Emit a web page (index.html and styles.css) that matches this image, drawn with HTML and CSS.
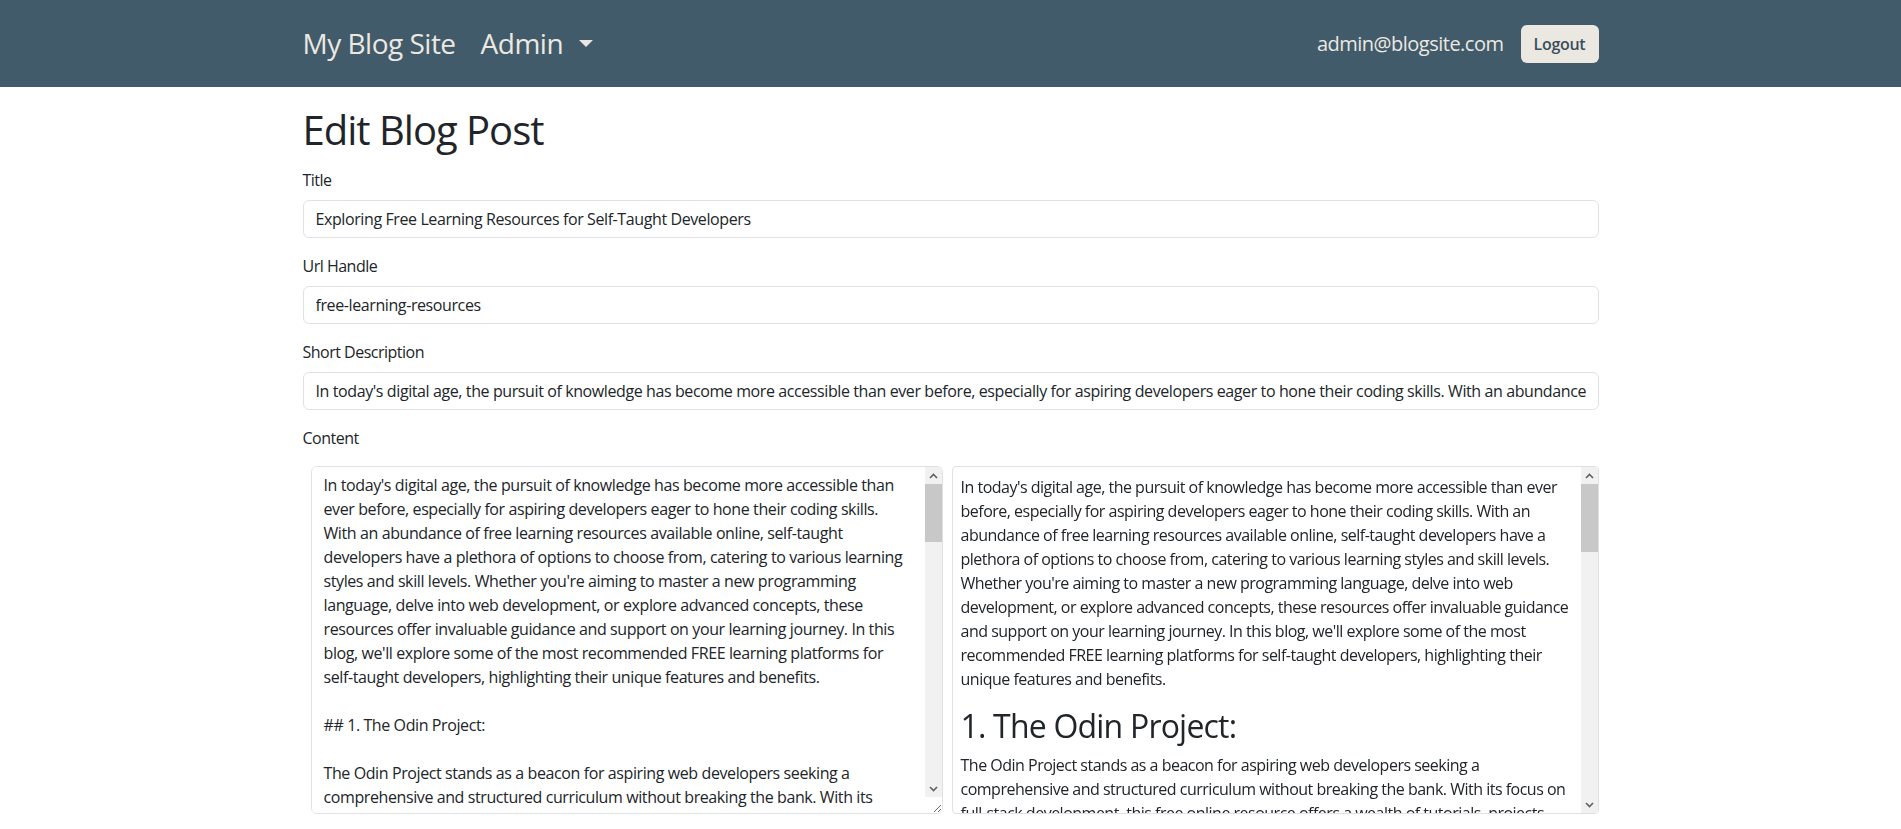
FILE: index.html
```html
<!DOCTYPE html>
<html lang="en">
<head>
<meta charset="utf-8">
<title>Edit Blog Post - My Blog Site</title>
<link rel="stylesheet" href="styles.css">
</head>
<body>
<nav class="navbar">
  <div class="nav-inner">
    <a class="brand" href="#">My Blog Site</a>
    <a class="admin" href="#">Admin<span class="caret"></span></a>
    <div class="nav-right">
      <span class="email">admin@blogsite.com</span>
      <button class="logout" type="button">Logout</button>
    </div>
  </div>
</nav>
<main class="page">
  <h1 class="page-title">Edit Blog Post</h1>
  <form class="post-form">
    <div class="field">
      <label class="label" for="title">Title</label>
      <input class="control" id="title" type="text" value="Exploring Free Learning Resources for Self-Taught Developers">
    </div>
    <div class="field">
      <label class="label" for="handle">Url Handle</label>
      <input class="control" id="handle" type="text" value="free-learning-resources">
    </div>
    <div class="field">
      <label class="label" for="short">Short Description</label>
      <input class="control" id="short" type="text" value="In today's digital age, the pursuit of knowledge has become more accessible than ever before, especially for aspiring developers eager to hone their coding skills. With an abundance of free learning resources available online, self-taught developers have a plethora of options to choose from.">
    </div>
    <div class="field">
      <label class="label" for="content">Content</label>
      <div class="editor">
        <div class="pane pane-input">
          <textarea class="editor-input" id="content">In today's digital age, the pursuit of knowledge has become more accessible than ever before, especially for aspiring developers eager to hone their coding skills. With an abundance of free learning resources available online, self-taught developers have a plethora of options to choose from, catering to various learning styles and skill levels. Whether you're aiming to master a new programming language, delve into web development, or explore advanced concepts, these resources offer invaluable guidance and support on your learning journey. In this blog, we'll explore some of the most recommended FREE learning platforms for self-taught developers, highlighting their unique features and benefits.

## 1. The Odin Project:

The Odin Project stands as a beacon for aspiring web developers seeking a comprehensive and structured curriculum without breaking the bank. With its focus on full-stack development, this free online resource offers a wealth of tutorials, projects, and community support to guide learners from the fundamentals of HTML, CSS, and JavaScript all the way to building complete applications with Ruby on Rails or Node.js.

## 2. freeCodeCamp:

freeCodeCamp is a nonprofit organization that has helped millions of people learn to code for free. Its interactive curriculum covers responsive web design, JavaScript algorithms and data structures, front-end libraries, back-end development, and more. Learners earn verified certifications by completing hands-on projects, and the vibrant forum makes it easy to get help whenever you get stuck.

## 3. MDN Web Docs:

Maintained by Mozilla and a global community of contributors, MDN Web Docs is the go-to reference for anyone working with web technologies. Beyond its detailed documentation of HTML, CSS, and JavaScript, MDN offers beginner-friendly learning modules that walk you through core concepts step by step, complete with examples, assessments, and best practices.

## 4. CS50 by Harvard:

Harvard's CS50: Introduction to Computer Science is one of the most popular computer science courses in the world, and it is available completely free online. The course covers algorithms, data structures, memory, web development, and more using languages such as C, Python, SQL, and JavaScript, giving self-taught developers a solid foundation in computational thinking.

## 5. Khan Academy:

Khan Academy offers free, self-paced courses in computer programming, including JavaScript, HTML/CSS, and SQL. Its interactive coding environment lets learners see the results of their code instantly, which makes it an excellent starting point for absolute beginners who want to build confidence before diving into more advanced material.

## 6. Microsoft Learn:

Microsoft Learn provides free, interactive learning paths covering C#, .NET, ASP.NET Core, Azure, and much more. With guided modules, sandbox environments, and clear explanations, it is an especially valuable resource for developers who want to build modern web applications and APIs using the Microsoft technology stack.

## 7. YouTube Channels:

YouTube hosts an incredible variety of free programming tutorials from creators such as Traversy Media, The Net Ninja, Fireship, and freeCodeCamp's own channel. Whether you prefer short crash courses or in-depth multi-hour walkthroughs, video content can be a great complement to written tutorials and hands-on practice.

## Conclusion:

The journey of a self-taught developer is challenging but incredibly rewarding. By taking advantage of these free learning resources, you can build a strong foundation, develop real-world projects, and connect with supportive communities along the way. Stay curious, practice consistently, and remember that every expert was once a beginner. Happy coding!</textarea>
          <div class="scrollbar scrollbar-input" aria-hidden="true">
            <span class="sb-btn"><svg width="9" height="6" viewBox="0 0 9 6"><polyline points="1,5 4.5,1.5 8,5" fill="none" stroke="#606060" stroke-width="1.6"/></svg></span>
            <span class="sb-thumb sb-thumb-input"></span>
            <span class="sb-btn sb-down"><svg width="9" height="6" viewBox="0 0 9 6"><polyline points="1,1 4.5,4.5 8,1" fill="none" stroke="#606060" stroke-width="1.6"/></svg></span>
          </div>
        </div>
        <div class="pane pane-preview">
          <div class="preview">
            <p>In today's digital age, the pursuit of knowledge has become more accessible than ever before, especially for aspiring developers eager to hone their coding skills. With an abundance of free learning resources available online, self-taught developers have a plethora of options to choose from, catering to various learning styles and skill levels. Whether you're aiming to master a new programming language, delve into web development, or explore advanced concepts, these resources offer invaluable guidance and support on your learning journey. In this blog, we'll explore some of the most recommended FREE learning platforms for self-taught developers, highlighting their unique features and benefits.</p>
            <h2>1. The Odin Project:</h2>
            <p>The Odin Project stands as a beacon for aspiring web developers seeking a comprehensive and structured curriculum without breaking the bank. With its focus on full-stack development, this free online resource offers a wealth of tutorials, projects, and community support to guide learners from the fundamentals of HTML, CSS, and JavaScript all the way to building complete applications with Ruby on Rails or Node.js.</p>
            <h2>2. freeCodeCamp:</h2>
            <p>freeCodeCamp is a nonprofit organization that has helped millions of people learn to code for free. Its interactive curriculum covers responsive web design, JavaScript algorithms and data structures, front-end libraries, back-end development, and more. Learners earn verified certifications by completing hands-on projects, and the vibrant forum makes it easy to get help whenever you get stuck.</p>
            <h2>3. MDN Web Docs:</h2>
            <p>Maintained by Mozilla and a global community of contributors, MDN Web Docs is the go-to reference for anyone working with web technologies. Beyond its detailed documentation of HTML, CSS, and JavaScript, MDN offers beginner-friendly learning modules that walk you through core concepts step by step, complete with examples, assessments, and best practices.</p>
            <h2>4. CS50 by Harvard:</h2>
            <p>Harvard's CS50: Introduction to Computer Science is one of the most popular computer science courses in the world, and it is available completely free online. The course covers algorithms, data structures, memory, web development, and more using languages such as C, Python, SQL, and JavaScript, giving self-taught developers a solid foundation in computational thinking.</p>
            <h2>5. Khan Academy:</h2>
            <p>Khan Academy offers free, self-paced courses in computer programming, including JavaScript, HTML/CSS, and SQL. Its interactive coding environment lets learners see the results of their code instantly, which makes it an excellent starting point for absolute beginners who want to build confidence before diving into more advanced material.</p>
            <h2>6. Microsoft Learn:</h2>
            <p>Microsoft Learn provides free, interactive learning paths covering C#, .NET, ASP.NET Core, Azure, and much more. With guided modules, sandbox environments, and clear explanations, it is an especially valuable resource for developers who want to build modern web applications and APIs using the Microsoft technology stack.</p>
            <h2>7. YouTube Channels:</h2>
            <p>YouTube hosts an incredible variety of free programming tutorials from creators such as Traversy Media, The Net Ninja, Fireship, and freeCodeCamp's own channel. Whether you prefer short crash courses or in-depth multi-hour walkthroughs, video content can be a great complement to written tutorials and hands-on practice.</p>
            <h2>Conclusion:</h2>
            <p>The journey of a self-taught developer is challenging but incredibly rewarding. By taking advantage of these free learning resources, you can build a strong foundation, develop real-world projects, and connect with supportive communities along the way. Stay curious, practice consistently, and remember that every expert was once a beginner. Happy coding!</p>
          </div>
          <div class="scrollbar scrollbar-preview" aria-hidden="true">
            <span class="sb-btn"><svg width="9" height="6" viewBox="0 0 9 6"><polyline points="1,5 4.5,1.5 8,5" fill="none" stroke="#606060" stroke-width="1.6"/></svg></span>
            <span class="sb-thumb sb-thumb-preview"></span>
            <span class="sb-btn sb-down"><svg width="9" height="6" viewBox="0 0 9 6"><polyline points="1,1 4.5,4.5 8,1" fill="none" stroke="#606060" stroke-width="1.6"/></svg></span>
          </div>
        </div>
      </div>
    </div>
  </form>
</main>
</body>
</html>
```
FILE: styles.css
```css
* { box-sizing: border-box; }

html, body { margin: 0; padding: 0; }

body {
  font-family: "Open Sans", "Noto Sans", sans-serif;
  font-size: 16px;
  line-height: 1.5;
  letter-spacing: -0.5px;
  color: #212529;
  background: #ffffff;
}

.navbar {
  background: #415b6a;
  height: 87px;
}

.nav-inner {
  width: 1296px;
  height: 100%;
  margin: 0 auto;
  display: flex;
  align-items: center;
}

.brand,
.admin {
  font-size: 28px;
  line-height: 1.2;
  letter-spacing: -0.5px;
  color: #ece8e1;
  text-decoration: none;
}

.brand { margin-right: 25px; }

.admin {
  display: flex;
  align-items: center;
}

.caret {
  width: 0;
  height: 0;
  margin-left: 16px;
  border-left: 7px solid transparent;
  border-right: 7px solid transparent;
  border-top: 7px solid #ece8e1;
}

.nav-right {
  margin-left: auto;
  display: flex;
  align-items: center;
  gap: 17px;
}

.email {
  font-size: 20px;
  letter-spacing: -0.5px;
  color: #ece8e1;
}

.logout {
  width: 78px;
  height: 38px;
  border: 0;
  border-radius: 6px;
  background: #ebe8e2;
  color: #3b4f5c;
  font-family: inherit;
  font-size: 16px;
  font-weight: 600;
  letter-spacing: -0.3px;
  padding: 0;
}

.page {
  width: 1296px;
  margin: 0 auto;
}

.page-title {
  font-size: 40px;
  font-weight: 400;
  line-height: 1.2;
  letter-spacing: -1px;
  margin: 19px 0 14px;
}

.post-form { margin: 0; }

.field { margin-bottom: 16px; }

.label {
  display: block;
  margin-bottom: 8px;
}

.control {
  display: block;
  width: 100%;
  height: 38px;
  padding: 6px 12px;
  font-family: inherit;
  font-size: 16px;
  line-height: 1.5;
  letter-spacing: -0.4px;
  color: #212529;
  background: #fff;
  border: 1px solid #dee2e6;
  border-radius: 6px;
}

.editor {
  display: flex;
  gap: 9px;
  padding: 8px 0 0 8px;
}

.pane {
  position: relative;
  height: 348px;
}

.pane-input {
  width: 632px;
  flex: none;
}

.pane-preview { flex: 1; }

.editor-input {
  display: block;
  width: 100%;
  height: 100%;
  padding: 6px 29px 6px 12px;
  font-family: inherit;
  font-size: 16px;
  line-height: 1.5;
  letter-spacing: -0.4px;
  color: #212529;
  border: 1px solid #dee2e6;
  border-radius: 6px;
  overflow-y: scroll;
  margin: 0;
}

.preview {
  height: 100%;
  padding: 8px 25px 8px 8px;
  border: 1px solid #dee2e6;
  border-radius: 4px;
  overflow-y: scroll;
}

.preview p { margin: 0 0 16px; }

.preview h2 {
  font-size: 32px;
  font-weight: 400;
  line-height: 1.2;
  letter-spacing: -0.8px;
  margin: 0 0 8px;
}

.scrollbar {
  position: absolute;
  top: 1px;
  right: 1px;
  width: 17px;
  background: #f1f1f1;
  display: flex;
  flex-direction: column;
  pointer-events: none;
}

.scrollbar-input { bottom: 17px; }

.scrollbar-preview { bottom: 1px; }

.sb-btn {
  height: 17px;
  flex: none;
  display: flex;
  align-items: center;
  justify-content: center;
}

.sb-down { margin-top: auto; }

.sb-thumb {
  flex: none;
  background: #c8c8c8;
}

.sb-thumb-input { height: 58px; }

.sb-thumb-preview { height: 68px; }
```
